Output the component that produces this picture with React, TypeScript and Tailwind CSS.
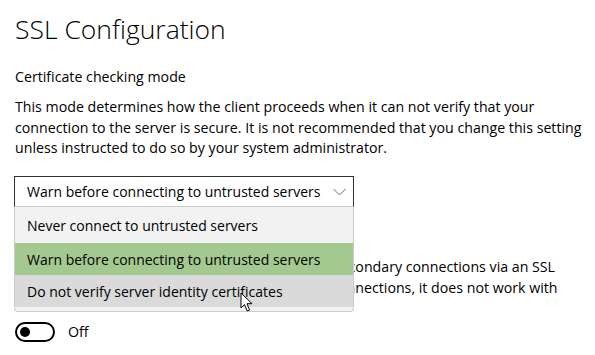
const options = [
  { label: "Never connect to untrusted servers", tone: "bg-[#f2f2f2] h-[36px]" },
  { label: "Warn before connecting to untrusted servers", tone: "bg-[#a4c990] h-[32px]" },
  { label: "Do not verify server identity certificates", tone: "bg-[#dadada] h-[32px]" },
];

function Cursor() {
  return (
    <svg
      className="absolute left-[240px] top-[292px] pointer-events-none"
      width="14"
      height="21"
      viewBox="0 0 14 21"
    >
      <path
        d="M1 1 L1 16 L4.5 12.5 L7.2 19 L9.6 18 L7 11.7 L12 11.7 Z"
        fill="#fff"
        stroke="#000"
        strokeWidth="1"
        strokeLinejoin="round"
      />
    </svg>
  );
}

function Chevron() {
  return (
    <svg width="13" height="8" viewBox="0 0 13 8" fill="none" className="text-[#6b6b6b]">
      <path d="M0.5 1 L6.5 7 L12.5 1" stroke="currentColor" strokeWidth="1" />
    </svg>
  );
}

export default function App() {
  return (
    <div
      className="relative w-[595px] h-[355px] bg-white text-black overflow-hidden"
      style={{ fontFamily: '"Segoe UI", "Open Sans", sans-serif' }}
    >
      <div className="flex flex-col pl-[15px] pr-2">
        <h1 className="pt-[12px] text-[26.5px] leading-[34px] font-light">SSL Configuration</h1>
        <div className="mt-[21px] text-[14.2px] leading-[20px]">Certificate checking mode</div>
        <p className="mt-[10px] text-[14.2px] leading-[20.5px] max-w-[580px]">
          This mode determines how the client proceeds when it can not verify that your
          connection to the server is secure. It is not recommended that you change this setting
          unless instructed to do so by your system administrator.
        </p>

        {/* Combo box */}
        <div className="mt-[17.5px] w-[340px] -ml-px">
          <div className="flex items-center justify-between h-[31px] border border-[#333] border-b-[#cccccc] pl-[12px] pr-[7px] text-[14px]">
            <span>Warn before connecting to untrusted servers</span>
            <Chevron />
          </div>
        </div>

        {/* Secondary connections (mostly hidden behind the open list) */}
        <div className="mt-[21px] text-[14.2px] leading-[20px]">Secondary connections</div>
        <p className="mt-[9px] text-[14.2px] leading-[20.5px] whitespace-nowrap">
          Use this option if the client should establish any secondary connections via an SSL
          <br />
          tunnel. While this improves the security of such connections, it does not work with
        </p>

        <div className="mt-[23px] flex items-center gap-[13px]">
          <div className="flex items-center w-[40px] h-[20px] rounded-full border-2 border-black px-[3px]">
            <div className="w-[10px] h-[10px] rounded-full bg-black" />
          </div>
          <span className="text-[14.2px]">Off</span>
        </div>
      </div>

      {/* Open dropdown list */}
      <div className="absolute left-[14px] top-[207px] w-[340px] bg-[#f2f2f2] border border-t-0 border-[#cccccc] rounded-b-[4px] pb-[4px] text-[14px] overflow-hidden">
        {options.map((o) => (
          <div key={o.label} className={`flex items-center pl-[12px] ${o.tone}`}>
            {o.label}
          </div>
        ))}
      </div>

      <Cursor />
    </div>
  );
}
